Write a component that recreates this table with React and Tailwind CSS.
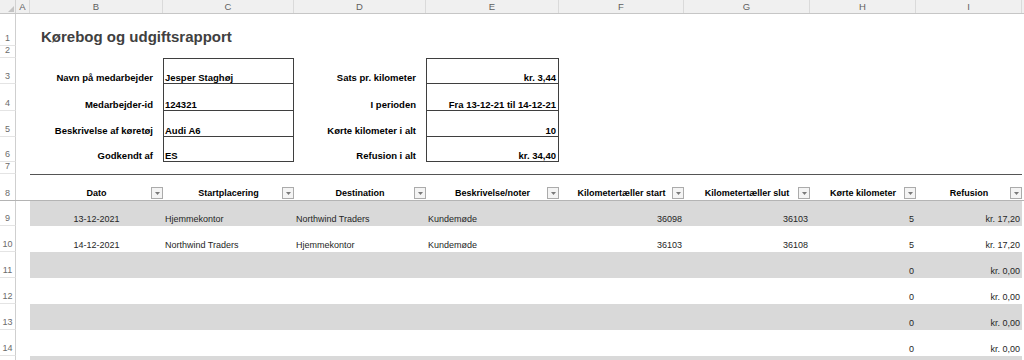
import React from "react";

const GRID =
  "grid grid-cols-[16px_14px_133px_131px_132px_133px_125px_126px_106px_106px_2px]";

const kolonner = ["A", "B", "C", "D", "E", "F", "G", "H", "I"];

const overskrifter = [
  "Dato",
  "Startplacering",
  "Destination",
  "Beskrivelse/noter",
  "Kilometertæller start",
  "Kilometertæller slut",
  "Kørte kilometer",
  "Refusion",
];

const kørsler = [
  { n: 9, dato: "13-12-2021", start: "Hjemmekontor", dest: "Northwind Traders", note: "Kundemøde", kmStart: "36098", kmSlut: "36103", km: "5", refusion: "kr. 17,20" },
  { n: 10, dato: "14-12-2021", start: "Northwind Traders", dest: "Hjemmekontor", note: "Kundemøde", kmStart: "36103", kmSlut: "36108", km: "5", refusion: "kr. 17,20" },
  { n: 11, km: "0", refusion: "kr. 0,00" },
  { n: 12, km: "0", refusion: "kr. 0,00" },
  { n: 13, km: "0", refusion: "kr. 0,00" },
  { n: 14, km: "0", refusion: "kr. 0,00" },
  { n: 15, skjult: true },
];

function RowNum({ n }) {
  return (
    <div className="flex items-end justify-center pb-[2px] border-r border-b border-r-[#cfcfcf] border-b-[#e4e4e4] text-[9px] leading-none text-[#6b6b6b]">
      {n}
    </div>
  );
}

function Label({ children }) {
  return (
    <div className="flex items-end justify-end pr-[10px] pb-[2px] font-bold text-[9.5px] leading-none text-black whitespace-nowrap">
      {children}
    </div>
  );
}

function Boks({ children, top, right }) {
  return (
    <div
      className={`flex items-end pb-[1px] border-x border-b border-[#3f3f3f] font-bold text-[9.5px] leading-none text-black whitespace-nowrap ${
        top ? "border-t" : ""
      } ${right ? "justify-end pr-[2px]" : "pl-[1px]"}`}
    >
      {children}
    </div>
  );
}

function FilterKnap() {
  return (
    <span className="w-[12px] h-[12px] mb-[1px] shrink-0 flex items-center justify-center border border-[#ababab] bg-[#f4f4f4]">
      <svg width="5" height="3" viewBox="0 0 5 3">
        <polygon points="0,0 5,0 2.5,3" fill="#7a7a7a" />
      </svg>
    </span>
  );
}

function Celle({ children, align = "left", grey }) {
  const justering =
    align === "right"
      ? "justify-end pr-[2px]"
      : align === "center"
      ? "justify-center"
      : "justify-start pl-[2px]";
  return (
    <div
      className={`flex items-end pb-[2px] text-[9px] leading-none text-[#262626] whitespace-nowrap ${justering} ${
        grey ? "bg-[#d9d9d9]" : ""
      }`}
    >
      {children}
    </div>
  );
}

export default function App() {
  const topfelter = [
    { n: 3, h: "h-[26px]", l1: "Navn på medarbejder", v1: "Jesper Staghøj", l2: "Sats pr. kilometer", v2: "kr. 3,44" },
    { n: 4, h: "h-[27px]", l1: "Medarbejder-id", v1: "124321", l2: "I perioden", v2: "Fra 13-12-21 til 14-12-21" },
    { n: 5, h: "h-[26px]", l1: "Beskrivelse af køretøj", v1: "Audi A6", l2: "Kørte kilometer i alt", v2: "10" },
    { n: 6, h: "h-[25px]", l1: "Godkendt af", v1: "ES", l2: "Refusion i alt", v2: "kr. 34,40" },
  ];

  return (
    <div className="w-[1024px] h-[360px] overflow-hidden bg-white font-['Liberation_Sans',Arial,sans-serif]">
      {/* kolonneoverskrifter */}
      <div className={`${GRID} h-[14px] bg-[#f0f0f0] border-b border-[#c6c6c6]`}>
        <div className="flex items-end justify-end pr-[1px] pb-[1px] border-r border-[#d2d2d2]">
          <svg width="6" height="6" viewBox="0 0 6 6">
            <polygon points="6,0 6,6 0,6" fill="#c4c4c4" />
          </svg>
        </div>
        {kolonner.map((k) => (
          <div
            key={k}
            className="flex items-center justify-center border-r border-[#dadada] text-[9.5px] leading-none text-[#5f5f5f]"
          >
            {k}
          </div>
        ))}
        <div />
      </div>

      {/* række 1 - titel */}
      <div className={`${GRID} h-[32px]`}>
        <RowNum n={1} />
        <div />
        <div className="col-span-8 flex items-end pl-[11px] pb-[2px] font-bold text-[15px] leading-none text-[#404040]">
          Kørebog og udgiftsrapport
        </div>
        <div />
      </div>

      {/* række 2 */}
      <div className={`${GRID} h-[12px]`}>
        <RowNum n={2} />
      </div>

      {topfelter.map((r) => (
        <div key={r.n} className={`${GRID} ${r.h}`}>
          <RowNum n={r.n} />
          <div />
          <Label>{r.l1}</Label>
          <Boks top={r.n === 3}>{r.v1}</Boks>
          <Label>{r.l2}</Label>
          <Boks top={r.n === 3} right>
            {r.v2}
          </Boks>
          <div className="col-span-5" />
        </div>
      ))}

      {/* række 7 */}
      <div className={`${GRID} h-[12px]`}>
        <RowNum n={7} />
      </div>

      {/* række 8 - tabeloverskrifter */}
      <div className={`${GRID} h-[27px] border-b border-[#b4b4b4]`}>
        <div className="flex items-end justify-center pb-[2px] border-r border-[#cfcfcf] text-[9px] leading-none text-[#6b6b6b]">
          8
        </div>
        <div />
        {overskrifter.map((o) => (
          <div
            key={o}
            className="flex items-end pl-[12px] border-t border-[#555555] font-bold text-[9px] leading-none text-black whitespace-nowrap"
          >
            <span className="flex-1 text-center pb-[2px]">{o}</span>
            <FilterKnap />
          </div>
        ))}
        <div />
      </div>

      {/* data */}
      {kørsler.map((r, i) => {
        const grey = i % 2 === 0;
        return (
          <div key={r.n} className={`${GRID} ${r.n === 9 ? "h-[25px]" : "h-[26px]"}`}>
            <RowNum n={r.skjult ? "" : r.n} />
            <div />
            <Celle grey={grey} align="center">
              {r.dato}
            </Celle>
            <Celle grey={grey}>{r.start}</Celle>
            <Celle grey={grey}>{r.dest}</Celle>
            <Celle grey={grey}>{r.note}</Celle>
            <Celle grey={grey} align="right">
              {r.kmStart}
            </Celle>
            <Celle grey={grey} align="right">
              {r.kmSlut}
            </Celle>
            <Celle grey={grey} align="right">
              {r.km}
            </Celle>
            <Celle grey={grey} align="right">
              {r.refusion}
            </Celle>
            <div />
          </div>
        );
      })}
    </div>
  );
}
